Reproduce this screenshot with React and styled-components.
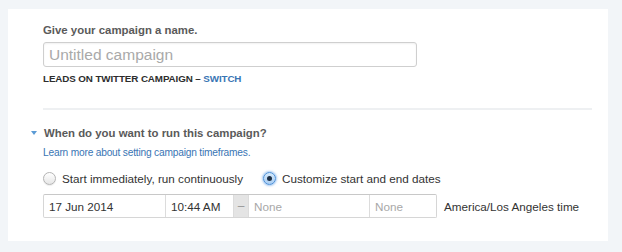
import React from "react";
import styled, { createGlobalStyle } from "styled-components";

const Global = createGlobalStyle`
  html, body { margin: 0; padding: 0; background: #f2f5f8; }
  body { font-family: "Liberation Sans", Arial, sans-serif; }
  * { box-sizing: border-box; }
`;

const Page = styled.div`
  width: 622px;
  height: 252px;
  padding: 9px 14px 0 8px;
`;

const Card = styled.div`
  background: #fff;
  padding: 14px 16px 23px 35px;
  display: flex;
  flex-direction: column;
`;

const Label = styled.div`
  font-size: 11.4px;
  line-height: 15px;
  font-weight: bold;
  color: #5a5a5a;
`;

const NameInput = styled.input`
  margin-top: 4px;
  width: 374px;
  height: 25px;
  border: 1px solid #cfcfcf;
  border-radius: 3px;
  box-shadow: inset 0 1px 2px rgba(0, 0, 0, 0.06);
  padding: 0 5px;
  font-family: inherit;
  font-size: 15.5px;
  color: #333;
  outline: none;
  &::placeholder { color: #a9a9a9; }
`;

const Caption = styled.div`
  margin-top: 5px;
  font-size: 9.8px;
  line-height: 14px;
  font-weight: bold;
  color: #2d2d2d;
  letter-spacing: -0.1px;
`;

const Link = styled.a`
  color: #3975b4;
  text-decoration: none;
`;

const Divider = styled.hr`
  margin: 22px 0 0 0;
  border: 0;
  height: 2px;
  background: #eef0f2;
`;

const SectionHead = styled.div`
  margin: 16px 0 0 -12px;
  display: flex;
  align-items: center;
  gap: 7px;
`;

const Caret = styled.span`
  width: 0;
  height: 0;
  border-left: 3.5px solid transparent;
  border-right: 3.5px solid transparent;
  border-top: 4px solid #5b9bd5;
  margin-top: -2px;
`;

const SmallLink = styled(Link)`
  margin-top: 5px;
  font-size: 10.2px;
  line-height: 14px;
  letter-spacing: -0.2px;
`;

const RadioRow = styled.div`
  margin-top: 9px;
  display: flex;
  align-items: center;
  height: 18px;
`;

const RadioLabel = styled.label`
  display: flex;
  align-items: center;
  gap: 6px;
  font-size: 11.7px;
  color: #333;
  margin-right: 20px;
`;

const RadioDot = styled.span`
  width: 13px;
  height: 13px;
  border-radius: 50%;
  display: flex;
  align-items: center;
  justify-content: center;
  border: 1px solid ${(p) => (p.$on ? "#4a8fd8" : "#b4b4b4")};
  background: ${(p) =>
    p.$on
      ? "linear-gradient(#d5e9fb, #a9cdf2)"
      : "linear-gradient(#ffffff, #e6e6e6)"};
  box-shadow: ${(p) => (p.$on ? "0 0 2px 1px rgba(80,150,230,0.5)" : "0 1px 1px rgba(0,0,0,0.08)")};
  &::after {
    content: "";
    display: ${(p) => (p.$on ? "block" : "none")};
    width: 5px;
    height: 5px;
    border-radius: 50%;
    background: #1d2f45;
  }
`;

const DateRow = styled.div`
  margin-top: 7px;
  display: flex;
  align-items: center;
`;

const Fields = styled.div`
  display: flex;
  height: 24px;
  border: 1px solid #d6d6d6;
  border-top-color: #c8c8c8;
  border-radius: 2px;
`;

const Field = styled.div`
  width: ${(p) => p.$w}px;
  display: flex;
  align-items: center;
  padding-left: 5px;
  font-size: 11.7px;
  color: ${(p) => (p.$empty ? "#a8a8a8" : "#333")};
  border-left: ${(p) => (p.$first ? "none" : "1px solid #dcdcdc")};
`;

const Dash = styled.div`
  width: 15px;
  background: #e4e4e4;
  color: #999;
  font-size: 12px;
  display: flex;
  align-items: center;
  justify-content: center;
  border-left: 1px solid #dcdcdc;
`;

const Zone = styled.span`
  margin-left: 7px;
  font-size: 11.7px;
  color: #333;
`;

export default function App() {
  return (
    <>
      <Global />
      <Page>
        <Card>
          <Label>Give your campaign a name.</Label>
          <NameInput placeholder="Untitled campaign" />
          <Caption>
            LEADS ON TWITTER CAMPAIGN – <Link href="#">SWITCH</Link>
          </Caption>
          <Divider />
          <SectionHead>
            <Caret />
            <Label>When do you want to run this campaign?</Label>
          </SectionHead>
          <SmallLink href="#">Learn more about setting campaign timeframes.</SmallLink>
          <RadioRow>
            <RadioLabel>
              <RadioDot />
              Start immediately, run continuously
            </RadioLabel>
            <RadioLabel>
              <RadioDot $on />
              Customize start and end dates
            </RadioLabel>
          </RadioRow>
          <DateRow>
            <Fields>
              <Field $w={121} $first>17 Jun 2014</Field>
              <Field $w={68}>10:44 AM</Field>
              <Dash>–</Dash>
              <Field $w={121} $empty>None</Field>
              <Field $w={67} $empty>None</Field>
            </Fields>
            <Zone>America/Los Angeles time</Zone>
          </DateRow>
        </Card>
      </Page>
    </>
  );
}
